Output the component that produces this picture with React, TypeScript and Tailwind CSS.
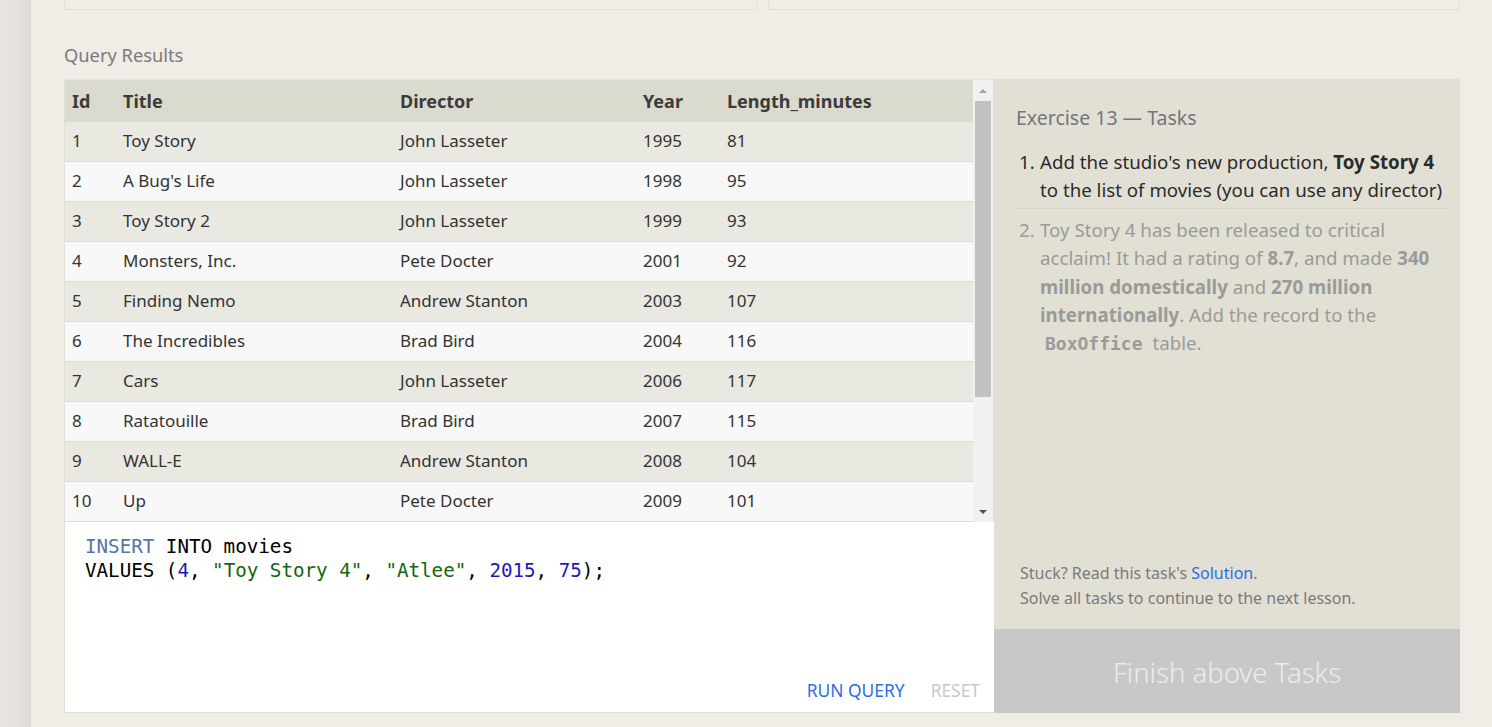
const movies = [
  [1, "Toy Story", "John Lasseter", 1995, 81],
  [2, "A Bug's Life", "John Lasseter", 1998, 95],
  [3, "Toy Story 2", "John Lasseter", 1999, 93],
  [4, "Monsters, Inc.", "Pete Docter", 2001, 92],
  [5, "Finding Nemo", "Andrew Stanton", 2003, 107],
  [6, "The Incredibles", "Brad Bird", 2004, 116],
  [7, "Cars", "John Lasseter", 2006, 117],
  [8, "Ratatouille", "Brad Bird", 2007, 115],
  [9, "WALL-E", "Andrew Stanton", 2008, 104],
  [10, "Up", "Pete Docter", 2009, 101],
];

const cols = "grid grid-cols-[51px_277px_243px_84px_1fr]";

export default function App() {
  return (
    <div className="flex h-[727px] w-full overflow-hidden bg-[#f0ede6] font-['Noto_Sans',sans-serif]">
      <div className="w-[31px] shrink-0 bg-gradient-to-r from-[#e9e6e2] via-[#e6e3de] to-[#dcd8d3]" />
      <div className="ml-[33px] flex w-[1396px] flex-col">
        <div className="flex gap-[11px]">
          <div className="h-[10px] w-[693px] border-x border-b border-[#e3e0d8]" />
          <div className="h-[10px] flex-1 border-x border-b border-[#e3e0d8]" />
        </div>

        <h2 className="mt-[33px] h-[24px] text-[18.3px] leading-[24px] text-[#7b7b7b]">Query Results</h2>

        <div className="mt-[12px] flex h-[634px]">
          <div className="flex w-[930px] flex-col border-l border-b border-[#e2dfd6]">
            <div className="flex h-[443px] border-t border-[#e6e4dc]">
              <div className="flex-1 overflow-hidden">
                <div className={`${cols} h-[42px] items-center bg-[#dadacf] text-[18px] font-bold text-[#3b3b3b]`}>
                  <div className="px-[7px]">Id</div>
                  <div className="px-[7px]">Title</div>
                  <div className="px-[7px]">Director</div>
                  <div className="px-[7px]">Year</div>
                  <div className="px-[7px]">Length_minutes</div>
                </div>
                {movies.map((m, i) => (
                  <div
                    key={m[0]}
                    className={`${cols} h-[40px] items-center border-b border-[#dedcd6] text-[17px] leading-[22px] text-[#333] ${
                      i % 2 === 0 ? "bg-[#e9e8e1]" : "bg-[#f8f8f8]"
                    }`}
                  >
                    {m.map((v, j) => (
                      <div key={j} className="px-[7px] pb-[2px]">
                        {v}
                      </div>
                    ))}
                  </div>
                ))}
              </div>
              <div className="flex w-[21px] flex-col border-r border-[#e2dfd6] bg-[#f1f1f1]">
                <div className="flex h-[21px] items-center justify-center">
                  <div className="h-0 w-0 border-x-[4px] border-b-[4px] border-x-transparent border-b-[#a3a3a3]" />
                </div>
                <div className="mx-[2px] h-[296px] bg-[#c1c1c1]" />
                <div className="flex-1" />
                <div className="flex h-[21px] items-center justify-center">
                  <div className="h-0 w-0 border-x-[4px] border-t-[4px] border-x-transparent border-t-[#505050]" />
                </div>
              </div>
            </div>

            <div className="flex flex-1 flex-col bg-white">
              <pre className="px-[20px] pt-[13px] font-['DejaVu_Sans_Mono',monospace] text-[19.2px] leading-[24px] text-black">
                <span className="text-[#5474a8]">INSERT</span> INTO movies{"\n"}VALUES (
                <span className="text-[#1a1ab8]">4</span>, <span className="text-[#116611]">"Toy Story 4"</span>,{" "}
                <span className="text-[#116611]">"Atlee"</span>, <span className="text-[#1a1ab8]">2015</span>,{" "}
                <span className="text-[#1a1ab8]">75</span>);
              </pre>
              <div className="mt-auto flex justify-end gap-[26px] pr-[14px] pb-[10px] text-[17.4px] leading-[24px]">
                <span className="text-[#2a6ee6]">RUN QUERY</span>
                <span className="text-[#c9c9c9]">RESET</span>
              </div>
            </div>
          </div>

          <div className="flex w-[466px] flex-col">
            <div className="flex flex-1 flex-col bg-[#e2e0d5] pl-[22px] pr-[10px] pt-[26px] pb-[18px]">
              <h3 className="text-[19.5px] leading-[26px] text-[#74757d]">Exercise 13 — Tasks</h3>
              <ol className="mt-[17px] text-[18.7px] leading-[28px]">
                <li className="flex border-b border-[#d6d4ca] pb-[4px] text-[#2b2b2b]">
                  <span className="w-[24px] shrink-0 pl-[3px]">1.</span>
                  <span>
                    Add the studio's new production, <b>Toy Story 4</b> to the list of movies (you can use any
                    director)
                  </span>
                </li>
                <li className="flex pt-[7px] leading-[28.3px] text-[#9a9a98]">
                  <span className="w-[24px] shrink-0 pl-[3px]">2.</span>
                  <span>
                    Toy Story 4 has been released to critical acclaim! It had a rating of <b>8.7</b>, and made{" "}
                    <b>340 million domestically</b> and <b>270 million internationally</b>. Add the record to the{" "}
                    <code className="px-[5px] font-['DejaVu_Sans_Mono',monospace] text-[18px] font-bold">BoxOffice</code>{" "}
                    table.
                  </span>
                </li>
              </ol>
              <div className="mt-auto pl-[4px] text-[16px] leading-[25px] text-[#7a7a7a]">
                <p>
                  Stuck? Read this task's <span className="text-[#2a6ee6]">Solution</span>.
                </p>
                <p>Solve all tasks to continue to the next lesson.</p>
              </div>
            </div>
            <div className="flex h-[84px] items-center justify-center bg-[#c8c8c8] pt-[4px] text-[27.5px] font-light text-[#ececec]">
              Finish above Tasks
            </div>
          </div>
        </div>
      </div>
    </div>
  );
}
